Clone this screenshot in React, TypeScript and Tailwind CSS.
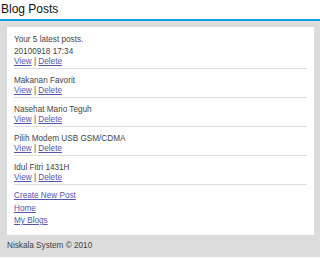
import React from 'react';

const posts = [
  '20100918 17:34',
  'Makanan Favorit',
  'Nasehat Mario Teguh',
  'Pilih Modem USB GSM/CDMA',
  'Idul Fitri 1431H',
];

function PostLinks() {
  return (
    <div className="h-[10px] leading-[10px]">
      <a href="#" className="text-[#5454ac] underline">View</a>
      <span> | </span>
      <a href="#" className="text-[#5454ac] underline">Delete</a>
    </div>
  );
}

export default function App() {
  return (
    <div className="w-[320px] h-[259px] bg-white font-['Liberation_Sans',Arial,sans-serif] text-[#444]">
      {/* header */}
      <div className="h-[19px] pl-[1px] text-[12px] leading-[19px] text-[#111]">Blog Posts</div>
      <div className="h-[2px] bg-[#0ea2e2]" />

      <div className="bg-[#dcdcdc] pt-[6px] pl-[7px] pr-[6px]">
        <div className="bg-white pt-[8px] px-[7px] pb-[9px] text-[8.2px]">
          <div className="h-[10px] leading-[10px]">Your 5 latest posts.</div>

          {posts.map((title, i) => (
            <div
              key={title}
              className={`border-b border-[#dedede] pb-[1px] ${i === 0 ? 'pt-[2px]' : 'pt-[7px]'}`}
            >
              <div className="h-[10px] leading-[10px]">{title}</div>
              <PostLinks />
            </div>
          ))}

          <div className="mt-[6px]">
            <div className="h-[13px] leading-[10px]">
              <a href="#" className="text-[#5454ac] underline">Create New Post</a>
            </div>
            <div className="h-[12px] leading-[10px]">
              <a href="#" className="text-[#5454ac] underline">Home</a>
            </div>
            <div className="h-[10px] leading-[10px]">
              <a href="#" className="text-[#5454ac] underline">My Blogs</a>
            </div>
          </div>
        </div>

        {/* footer */}
        <div className="h-[22px] pt-[6px] text-[8.2px] leading-[10px] text-[#444]">Niskala System © 2010</div>
      </div>
    </div>
  );
}
